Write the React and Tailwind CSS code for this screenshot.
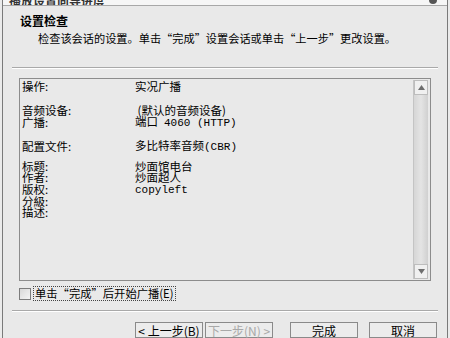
import React from 'react'

const cjk = { fontFamily: '"Noto Sans CJK SC", "DejaVu Sans", sans-serif' }
const mono = { fontFamily: '"Liberation Mono", "Noto Sans CJK SC", monospace' }

function Row({ label, children, className = '' }) {
    return (
        <div className={`flex h-[11.7px] items-center leading-[11.7px] ${className}`}>
            <span className="w-[113px] shrink-0">{label}</span>
            <span>{children}</span>
        </div>
    )
}

function Button({ children, disabled, focused }) {
    return (
        <div
            className={`h-[16px] w-[68px] shrink-0 flex justify-center pt-[1px] border border-[#8a8a8a] bg-[#ececec] text-[12px] leading-[14px] ${disabled ? 'text-[#a8a8a8]' : 'text-black'} ${focused ? 'border-[#6a6a6a]' : ''}`}
        >
            {children}
        </div>
    )
}

export default function App() {
    return (
        <div className="w-[450px] h-[338px] overflow-hidden bg-[#ebebeb] px-[2px] text-black" style={cjk} lang="zh-CN">
            <div className="h-full border-l border-r border-[#7a7a7a] bg-[#e9e9e9] flex flex-col">
                <div className="h-[6px] shrink-0 overflow-hidden bg-[#f6f6f6] border-b border-[#a8a8a8] flex justify-between px-[6px]">
                    <span className="-mt-[8px] text-[12px] font-bold text-[#333]">播放设置向导进度</span>
                    <span className="-mt-[4px] mr-[4px] h-[8px] w-[8px] rounded-full bg-[#555]" />
                </div>

                <div className="pl-[17px] pt-[8px]">
                    <div className="text-[12px] font-bold leading-[14px]">设置检查</div>
                    <div className="pl-[18px] pt-[3px] text-[11.2px] leading-[14px]">
                        检查该会话的设置。单击“完成”设置会话或单击“上一步”更改设置。
                    </div>
                </div>

                <div className="mx-[9px] mt-[22px] border-t border-[#a9a9a9] border-b border-b-white" />

                <div className="mx-[16px] mt-[9px] h-[206px] border border-[#8c8c8c] bg-[#e9e9e9] flex">
                    <div className="flex-1 pl-[2px] pt-[2px] text-[11.5px]">
                        <Row label="操作:">实况广播</Row>
                        <Row label="音频设备:" className="mt-[12.3px]">&nbsp;(默认的音频设备)</Row>
                        <Row label="广播:">
                            端口<span style={mono} className="ml-[6px] text-[11px]">4060 (HTTP)</span>
                        </Row>
                        <Row label="配置文件:" className="mt-[12.3px]">
                            多比特率音频<span style={mono} className="text-[11px]">(CBR)</span>
                        </Row>
                        <Row label="标题:" className="mt-[8.3px]">炒面馆电台</Row>
                        <Row label="作者:">炒面超人</Row>
                        <Row label="版权:">
                            <span style={mono} className="text-[11px]">copyleft</span>
                        </Row>
                        <Row label="分級:" />
                        <Row label="描述:" />
                    </div>
                    <div className="w-[15px] my-[1px] mr-[2px] flex flex-col border-l border-[#c4c4c4] bg-gradient-to-r from-[#d6d6d6] via-[#e4e4e4] to-[#d0d0d0]">
                        <div className="h-[15px] flex items-center justify-center bg-[#f0f0f0] border border-[#bdbdbd]">
                            <svg width="7" height="5" viewBox="0 0 7 5">
                                <path d="M3.5 0 L7 5 L0 5 Z" fill="#6e6e6e" />
                            </svg>
                        </div>
                        <div className="flex-1" />
                        <div className="h-[15px] flex items-center justify-center bg-[#f0f0f0] border border-[#bdbdbd]">
                            <svg width="7" height="5" viewBox="0 0 7 5">
                                <path d="M0 0 L7 0 L3.5 5 Z" fill="#6e6e6e" />
                            </svg>
                        </div>
                    </div>
                </div>

                <div className="ml-[16px] mt-[6px] flex items-center gap-[3px]">
                    <div className="h-[12px] w-[12px] border border-[#7c7c7c] bg-gradient-to-br from-[#d8d8d8] to-[#f4f4f4]" />
                    <div className="px-[1px] text-[11.3px] leading-[13px] outline outline-1 outline-dotted outline-[#444]">
                        单击“完成”后开始广播(E)
                    </div>
                </div>

                <div className="mx-[9px] mt-[10px] border-t border-[#a9a9a9] border-b border-b-white" />

                <div className="mt-[10px] flex pl-[132px]">
                    <Button focused>&lt; 上一步(B)</Button>
                    <div className="w-[2px]" />
                    <Button disabled>下一步(N) &gt;</Button>
                    <div className="w-[17px]" />
                    <Button>完成</Button>
                    <div className="w-[11px]" />
                    <Button>取消</Button>
                </div>
            </div>
        </div>
    )
}
